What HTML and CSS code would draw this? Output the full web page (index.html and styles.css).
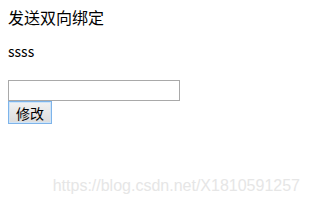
FILE: index.html
```html
<!DOCTYPE html>
<html lang="zh">
<head>
  <meta charset="UTF-8" />
  <title>双向绑定</title>
  <link rel="stylesheet" href="styles.css">
</head>
<body>
  <div class="title">发送双向绑定</div>
  <p class="msg">ssss</p>
  <div class="form">
    <input type="text" class="field">
    <button class="btn">修改</button>
  </div>
  <div class="watermark">https://blog.csdn.net/X1810591257</div>
</body>
</html>
```

FILE: styles.css
```css
body {
  margin: 8px;
  font-family: "Noto Sans CJK SC", "Liberation Sans", sans-serif;
  font-size: 14px;
  color: #000;
  background: #fff;
}
.title {
  font-size: 16px;
  line-height: 18px;
}
.msg {
  margin: 16px 0;
  line-height: 18px;
}
.form {
  margin-top: 20px;
  display: flex;
  flex-direction: column;
  align-items: flex-start;
}
.field {
  width: 172px;
  height: 21px;
  box-sizing: border-box;
  border: 1px solid #a9a9a9;
  margin: 0;
  padding: 1px 2px;
}
.btn {
  height: 23px;
  padding: 0 7px;
  margin: 0;
  font-family: "Noto Sans CJK SC", sans-serif;
  font-size: 14px;
  border: 1px solid #7eb4ea;
  background: linear-gradient(#f2f2f2, #dcdcdc);
  box-shadow: inset 0 0 0 1px #cfe4f7;
}
.watermark {
  position: absolute;
  right: 9px;
  top: 177px;
  font-family: "Liberation Sans", sans-serif;
  font-size: 16px;
  color: #e6e6e6;
}
```
